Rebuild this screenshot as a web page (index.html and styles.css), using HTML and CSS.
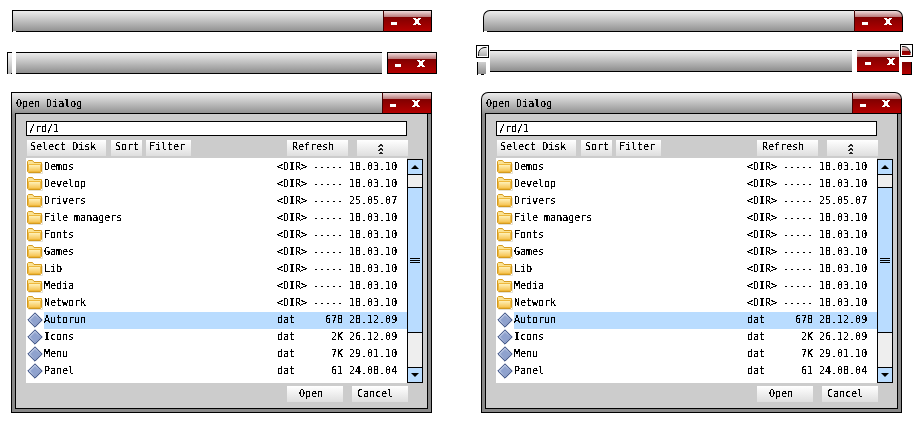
FILE: index.html
```html
<!DOCTYPE html>
<html lang="en">
<head>
<meta charset="utf-8">
<title>Skin preview</title>
<link rel="stylesheet" href="styles.css">
</head>
<body>
<svg class="defs" width="0" height="0" aria-hidden="true">
  <defs>
    <filter id="crisp" x="0" y="0" width="100%" height="100%" color-interpolation-filters="sRGB">
      <feComponentTransfer><feFuncA type="discrete" tableValues="0 0 0 0 1 1 1 1 1 1 1"/></feComponentTransfer>
    </filter>
    <linearGradient id="fold" x1="0" y1="0" x2="0" y2="1"><stop offset="0" stop-color="#fff4c0"/><stop offset="1" stop-color="#f6c24e"/></linearGradient>
    <linearGradient id="dia" x1="0" y1="0" x2="1" y2="1"><stop offset="0" stop-color="#d4def2"/><stop offset="1" stop-color="#6a7fb4"/></linearGradient>
    <linearGradient id="pinkred" x1="0" y1="0" x2="0" y2="1"><stop offset="0" stop-color="#e8d0d0"/><stop offset=".55" stop-color="#b87878"/><stop offset=".55" stop-color="#8a0000"/><stop offset="1" stop-color="#a80000"/></linearGradient>
    <linearGradient id="greyfill" x1="0" y1="0" x2="0" y2="1"><stop offset="0" stop-color="#f0f0f0"/><stop offset="1" stop-color="#b0b0b0"/></linearGradient>
    <symbol id="folder" viewBox="0 0 16 14">
      <path d="M.5 11.500V1.500L1.500 .5H5.500L7 2.500H14.500V11.500L13.500 12.500H1.500Z" fill="#fbe394" stroke="#d59a1e"/>
      <path d="M1.500 4.500H13.500V11.500H1.500Z" fill="url(#fold)" stroke="#eeb83c"/>
      <path d="M1.500 13.500H15.500V4" fill="none" stroke="#e6e2d4"/>
    </symbol>
    <symbol id="diamond" viewBox="0 0 16 16">
      <path d="M8 .8L15.200 8 8 15.200.8 8Z" fill="url(#dia)" stroke="#34497c"/>
      <path d="M8 3.500L12.500 8 8 12.500 3.500 8Z" fill="#8fa2ce"/>
    </symbol>
    <symbol id="caption" viewBox="0 0 49 20">
      <g fill="#fff" shape-rendering="crispEdges">
        <rect x="8" y="11" width="6" height="3"/>
        <path d="M30 7h3v1h2V7h3v1h-1v1h-1v3h1v1h1v1h-3v-1h-2v1h-3v-1h1v-1h1V9h-1V8h-1Z"/>
      </g>
    </symbol>
    <symbol id="carets" viewBox="0 0 9 12">
      <path d="M2 4h1V3h1V2h1v1h1v1h1M2 8h1V7h1V6h1v1h1v1h1M2 12h1v-1h1v-1h1v1h1v1h1" fill="none" stroke="#222" stroke-width="1" shape-rendering="crispEdges"/>
    </symbol>
  </defs>
</svg>

<main class="stage">
  <section class="col col-left">
    <div class="bar bar-top">
      <div class="grey"></div>
      <div class="red"><svg class="cap"><use href="#caption"/></svg></div>
    </div>
    <div class="parts">
      <div class="stub"></div>
      <div class="mid"></div>
      <div class="red red-cut"><svg class="cap"><use href="#caption"/></svg></div>
    </div>
    <div class="dlg">
      <div class="bar bar-dlg">
        <div class="grey grey-full"><span class="t title">Open Dialog</span></div>
        <div class="red"><svg class="cap"><use href="#caption"/></svg></div>
      </div>
      <div class="body">
        <div class="inner">
          <div class="path"><span class="t">/rd/1</span></div>
          <div class="tools">
            <button class="btn b-disk"><span class="t">Select Disk</span></button>
            <button class="btn b-sort"><span class="t">Sort</span></button>
            <button class="btn b-filter"><span class="t">Filter</span></button>
            <button class="btn b-refresh"><span class="t">Refresh</span></button>
            <button class="btn b-up"><svg class="carets"><use href="#carets"/></svg></button>
          </div>
          <div class="files">
            <ul class="list">
              <li class="row"><svg class="ico"><use href="#folder"/></svg><span class="t name">Demos</span><span class="t type">&lt;DIR&gt;</span><span class="t size">-----</span><span class="t date">18.03.10</span></li>
              <li class="row"><svg class="ico"><use href="#folder"/></svg><span class="t name">Develop</span><span class="t type">&lt;DIR&gt;</span><span class="t size">-----</span><span class="t date">18.03.10</span></li>
              <li class="row"><svg class="ico"><use href="#folder"/></svg><span class="t name">Drivers</span><span class="t type">&lt;DIR&gt;</span><span class="t size">-----</span><span class="t date">25.05.07</span></li>
              <li class="row"><svg class="ico"><use href="#folder"/></svg><span class="t name">File managers</span><span class="t type">&lt;DIR&gt;</span><span class="t size">-----</span><span class="t date">18.03.10</span></li>
              <li class="row"><svg class="ico"><use href="#folder"/></svg><span class="t name">Fonts</span><span class="t type">&lt;DIR&gt;</span><span class="t size">-----</span><span class="t date">18.03.10</span></li>
              <li class="row"><svg class="ico"><use href="#folder"/></svg><span class="t name">Games</span><span class="t type">&lt;DIR&gt;</span><span class="t size">-----</span><span class="t date">18.03.10</span></li>
              <li class="row"><svg class="ico"><use href="#folder"/></svg><span class="t name">Lib</span><span class="t type">&lt;DIR&gt;</span><span class="t size">-----</span><span class="t date">18.03.10</span></li>
              <li class="row"><svg class="ico"><use href="#folder"/></svg><span class="t name">Media</span><span class="t type">&lt;DIR&gt;</span><span class="t size">-----</span><span class="t date">18.03.10</span></li>
              <li class="row"><svg class="ico"><use href="#folder"/></svg><span class="t name">Network</span><span class="t type">&lt;DIR&gt;</span><span class="t size">-----</span><span class="t date">18.03.10</span></li>
              <li class="row sel"><svg class="ico"><use href="#diamond"/></svg><span class="t name">Autorun</span><span class="t type">dat</span><span class="t size">678</span><span class="t date">28.12.09</span></li>
              <li class="row"><svg class="ico"><use href="#diamond"/></svg><span class="t name">Icons</span><span class="t type">dat</span><span class="t size">2K</span><span class="t date">26.12.09</span></li>
              <li class="row"><svg class="ico"><use href="#diamond"/></svg><span class="t name">Menu</span><span class="t type">dat</span><span class="t size">7K</span><span class="t date">29.01.10</span></li>
              <li class="row"><svg class="ico"><use href="#diamond"/></svg><span class="t name">Panel</span><span class="t type">dat</span><span class="t size">61</span><span class="t date">24.08.04</span></li>
            </ul>
            <div class="scroll">
              <div class="arrow"><i class="tri"></i></div>
              <div class="seg seg-a"></div>
              <div class="thumb"><i class="grip"></i></div>
              <div class="seg seg-b"></div>
              <div class="arrow arrow-down"><i class="tri tri-down"></i></div>
            </div>
          </div>
          <div class="foot">
            <button class="btn b-open"><span class="t">Open</span></button>
            <button class="btn b-cancel"><span class="t">Cancel</span></button>
          </div>
        </div>
      </div>
    </div>
  </section>

  <section class="col col-right">
    <div class="bar bar-top bar-round">
      <div class="grey"></div>
      <div class="red"><svg class="cap"><use href="#caption"/></svg></div>
    </div>
    <div class="parts parts-round">
      <div class="stack">
        <svg class="corner" viewBox="0 0 13 13"><rect x=".5" y=".5" width="12" height="12" fill="#fff" stroke="#000"/><path d="M2.500 11V8.500Q3 3.500 8 2.500H11V11Z" fill="url(#greyfill)"/><path d="M2.500 11V8.500Q3 3.500 8 2.500H10.500" fill="none" stroke="#111"/></svg>
        <div class="stub stub-round"></div>
      </div>
      <div class="mid mid-round"></div>
      <div class="red red-short"><svg class="cap"><use href="#caption"/></svg></div>
      <div class="stack stack-r">
        <svg class="corner corner-r" viewBox="0 0 13 13"><rect x=".5" y=".5" width="12" height="12" fill="#fff" stroke="#000"/><path d="M2 2.500H4Q9 3 10.500 9V11H2Z" fill="url(#pinkred)"/><path d="M2 2.500H4Q9 3 10.500 9" fill="none" stroke="#222"/></svg>
        <div class="red-stub"></div>
      </div>
    </div>
    <div class="dlg dlg-round">
      <div class="bar bar-dlg bar-round">
        <div class="grey grey-full"><span class="t title">Open Dialog</span></div>
        <div class="red"><svg class="cap"><use href="#caption"/></svg></div>
      </div>
      <div class="body">
        <div class="inner">
          <div class="path"><span class="t">/rd/1</span></div>
          <div class="tools">
            <button class="btn b-disk"><span class="t">Select Disk</span></button>
            <button class="btn b-sort"><span class="t">Sort</span></button>
            <button class="btn b-filter"><span class="t">Filter</span></button>
            <button class="btn b-refresh"><span class="t">Refresh</span></button>
            <button class="btn b-up"><svg class="carets"><use href="#carets"/></svg></button>
          </div>
          <div class="files">
            <ul class="list">
              <li class="row"><svg class="ico"><use href="#folder"/></svg><span class="t name">Demos</span><span class="t type">&lt;DIR&gt;</span><span class="t size">-----</span><span class="t date">18.03.10</span></li>
              <li class="row"><svg class="ico"><use href="#folder"/></svg><span class="t name">Develop</span><span class="t type">&lt;DIR&gt;</span><span class="t size">-----</span><span class="t date">18.03.10</span></li>
              <li class="row"><svg class="ico"><use href="#folder"/></svg><span class="t name">Drivers</span><span class="t type">&lt;DIR&gt;</span><span class="t size">-----</span><span class="t date">25.05.07</span></li>
              <li class="row"><svg class="ico"><use href="#folder"/></svg><span class="t name">File managers</span><span class="t type">&lt;DIR&gt;</span><span class="t size">-----</span><span class="t date">18.03.10</span></li>
              <li class="row"><svg class="ico"><use href="#folder"/></svg><span class="t name">Fonts</span><span class="t type">&lt;DIR&gt;</span><span class="t size">-----</span><span class="t date">18.03.10</span></li>
              <li class="row"><svg class="ico"><use href="#folder"/></svg><span class="t name">Games</span><span class="t type">&lt;DIR&gt;</span><span class="t size">-----</span><span class="t date">18.03.10</span></li>
              <li class="row"><svg class="ico"><use href="#folder"/></svg><span class="t name">Lib</span><span class="t type">&lt;DIR&gt;</span><span class="t size">-----</span><span class="t date">18.03.10</span></li>
              <li class="row"><svg class="ico"><use href="#folder"/></svg><span class="t name">Media</span><span class="t type">&lt;DIR&gt;</span><span class="t size">-----</span><span class="t date">18.03.10</span></li>
              <li class="row"><svg class="ico"><use href="#folder"/></svg><span class="t name">Network</span><span class="t type">&lt;DIR&gt;</span><span class="t size">-----</span><span class="t date">18.03.10</span></li>
              <li class="row sel"><svg class="ico"><use href="#diamond"/></svg><span class="t name">Autorun</span><span class="t type">dat</span><span class="t size">678</span><span class="t date">28.12.09</span></li>
              <li class="row"><svg class="ico"><use href="#diamond"/></svg><span class="t name">Icons</span><span class="t type">dat</span><span class="t size">2K</span><span class="t date">26.12.09</span></li>
              <li class="row"><svg class="ico"><use href="#diamond"/></svg><span class="t name">Menu</span><span class="t type">dat</span><span class="t size">7K</span><span class="t date">29.01.10</span></li>
              <li class="row"><svg class="ico"><use href="#diamond"/></svg><span class="t name">Panel</span><span class="t type">dat</span><span class="t size">61</span><span class="t date">24.08.04</span></li>
            </ul>
            <div class="scroll">
              <div class="arrow"><i class="tri"></i></div>
              <div class="seg seg-a"></div>
              <div class="thumb"><i class="grip"></i></div>
              <div class="seg seg-b"></div>
              <div class="arrow arrow-down"><i class="tri tri-down"></i></div>
            </div>
          </div>
          <div class="foot">
            <button class="btn b-open"><span class="t">Open</span></button>
            <button class="btn b-cancel"><span class="t">Cancel</span></button>
          </div>
        </div>
      </div>
    </div>
  </section>
</main>
</body>
</html>
```
FILE: styles.css
```css
* { box-sizing: border-box; }
html, body { margin: 0; padding: 0; background: #fff; overflow: hidden; }
.defs { display: block; height: 0; }
.stage { display: flex; width: 920px; height: 425px; padding-left: 7px; }

.t {
  font-family: "DejaVu Sans Mono", "Liberation Mono", monospace;
  font-size: 10px;
  line-height: 12px;
  color: #000;
  white-space: pre;
  filter: url(#crisp);
}

.col { display: flex; flex-direction: column; align-items: flex-start; }
.col-left { width: 468px; }
.col-right { width: 440px; }

/* Caption bars */
.bar { display: flex; height: 22px; width: 420px; }
.bar-dlg { width: 421px; }
.bar-top { margin: 10px 0 0 5px; }
.col-right .bar-top { margin-left: 8px; }
.grey {
  flex: 1;
  border-top: 1px solid #000;
  border-left: 1px solid #000;
  background:
    linear-gradient(#000, #000) 3px 100% / 100% 1px no-repeat,
    linear-gradient(#fff, #fff) 0 100% / 3px 1px no-repeat,
    linear-gradient(#ececec, #8e8e8e);
}
.grey-full {
  background:
    linear-gradient(#000, #000) 3px 100% / 100% 1px no-repeat,
    linear-gradient(#ececec, #8e8e8e);
  padding: 5px 0 0 4px;
}
.title { display: block; }
.red {
  width: 49px;
  flex: none;
  overflow: hidden;
  border: 1px solid #000;
  border-left-color: #400;
  background: linear-gradient(#f0dcdc 0, #b87878 6px, #800000 6px, #b40000 100%);
}
.bar-dlg .red { width: 50px; }
.cap { display: block; width: 49px; height: 20px; margin-left: -1px; }
.bar-round .grey { border-top-left-radius: 7px; }
.bar-round .red { border-top-right-radius: 7px; }

/* Detached skin parts */
.parts { display: flex; align-items: flex-start; height: 22px; margin-top: 20px; }
.stub {
  width: 5px;
  height: 22px;
  border-top: 1px solid #000;
  border-left: 1px solid #000;
  background:
    linear-gradient(#000, #000) 100% 100% / 1px 1px no-repeat,
    linear-gradient(#f6f6f6, #b4b4b4);
}
.mid {
  width: 366px;
  height: 22px;
  margin-left: 4px;
  border-top: 1px solid #000;
  border-bottom: 1px solid #000;
  background: linear-gradient(#ececec, #8e8e8e);
}
.red-cut { height: 22px; width: 50px; margin-left: 5px; border-left-color: #000; }

.parts-round { height: 31px; margin-top: 13px; margin-left: 1px; }
.stack { display: flex; flex-direction: column; align-items: flex-start; width: 13px; }
.corner { display: block; width: 13px; height: 13px; }
.stub-round {
  width: 9px; height: 13px; margin: 4px 0 0 1px;
  border-top: 0;
  background:
    linear-gradient(#000, #000) 3px 100% / 3px 1px no-repeat,
    linear-gradient(#fff, #fff) 0 100% / 100% 1px no-repeat,
    linear-gradient(#cfcfcf, #8a8a8a);
}
.mid-round { width: 362px; margin: 5px 0 0 1px; height: 22px; }
.red-short {
  width: 42px; height: 22px; margin: 5px 0 0 5px;
  border-left: 0; border-right: 0;
}
.red-short .cap { margin-left: 0; }
.stack-r { margin: -1px 0 0 1px; }
.red-stub {
  width: 10px; height: 13px; margin: 5px 0 0 2px;
  border-right: 1px solid #000;
  border-bottom: 1px solid #000;
  background: linear-gradient(#800000, #b40000);
}

/* Dialog */
.dlg { width: 421px; height: 321px; margin: 18px 0 0 4px; }
.col-right .dlg { margin: 16px 0 0 6px; }
.body {
  height: 299px;
  background: #888;
  border: 1px solid #000;
  border-top: 0;
  padding: 0 3px 3px;
}
.inner {
  height: 100%;
  background: #ccc;
  border: 1px solid #000;
  border-top: 0;
  padding: 7px 0 0 10px;
}
.path {
  width: 381px;
  height: 15px;
  background: #fff;
  border: 1px solid #000;
  padding-left: 2px;
}
.path .t { display: block; line-height: 13px; }

.btn {
  display: flex;
  align-items: center;
  justify-content: flex-start;
  flex: none;
  margin: 0;
  padding: 0 0 0 3px;
  border: 0;
  background: linear-gradient(#fff, #dedede);
}
.tools { display: flex; height: 16px; margin: 4px 0 0 1px; }
.tools .btn .t { margin-bottom: 2px; }
.b-disk { width: 79px; }
.b-sort { width: 31px; margin-left: 5px; padding-left: 4px; }
.b-filter { width: 45px; margin-left: 4px; }
.b-refresh { width: 61px; margin-left: 96px; padding-left: 5px; }
.b-up { width: 51px; margin-left: 9px; padding-left: 19px; }
.carets { display: block; width: 9px; height: 12px; }

.files { display: flex; margin-top: 2px; height: 225px; }
.list {
  width: 381px;
  height: 225px;
  margin: 0;
  padding: 1px 0 0;
  list-style: none;
  background: #fff;
}
.row { display: flex; align-items: center; height: 17px; }
.ico { flex: none; align-self: flex-start; width: 16px; height: 16px; margin: 0 1px 0 1px; }
.name { width: 233px; }
.type { width: 36px; }
.size { width: 30px; text-align: right; }
.date { margin-left: 6px; }
.row .t { display: block; margin-bottom: 1px; }
.sel { background: linear-gradient(90deg, #fff 18px, #b9dcff 18px); }

.scroll {
  display: flex;
  flex-direction: column;
  width: 16px;
  height: 224px;
  margin-top: 1px;
}
.arrow {
  display: flex;
  align-items: center;
  justify-content: center;
  height: 16px;
  background: #b9dcff;
  border: 1px solid #000;
}
.tri {
  display: block;
  border-left: 4px solid transparent;
  border-right: 4px solid transparent;
  border-bottom: 4px solid #000;
}
.tri-down { border-bottom: 0; border-top: 4px solid #000; }
.seg { background: #eee; border-left: 1px solid #000; border-right: 1px solid #000; }
.seg-a { height: 12px; }
.seg-b { height: 34px; }
.thumb {
  display: flex;
  align-items: center;
  justify-content: center;
  height: 146px;
  background: #b9dcff;
  border: 1px solid #000;
}
.grip {
  display: block;
  width: 10px;
  height: 5px;
  border-top: 1px solid #000;
  border-bottom: 1px solid #000;
  background: linear-gradient(#000, #000) 0 50% / 100% 1px no-repeat;
}

.foot { display: flex; margin: 3px 0 0 261px; height: 16px; }
.b-open { width: 56px; padding-left: 12px; }
.b-cancel { width: 56px; margin-left: 9px; padding-left: 5px; }
```
